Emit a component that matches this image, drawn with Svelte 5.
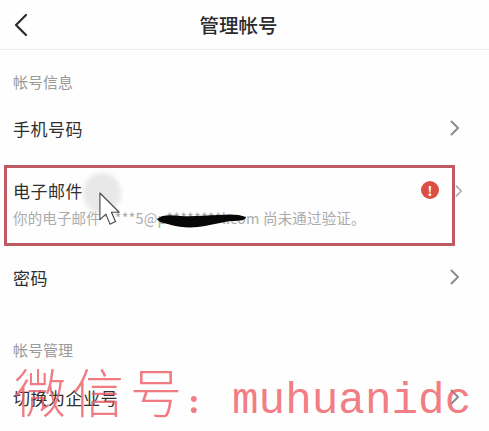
<script>
	const cjk = "管理帐号";
</script>

<div class="page">
	<header class="nav">
		<svg class="back" width="14" height="24" viewBox="0 0 14 24" fill="none" stroke="#2b2b2b" stroke-width="2.2" stroke-linecap="round" stroke-linejoin="round">
			<path d="M12 2 L2 12 L12 22" />
		</svg>
		<h1>{cjk}</h1>
	</header>

	<div class="label first">帐号信息</div>
	<div class="row phone">
		<span>手机号码</span>
		<svg class="chev" width="10" height="16" viewBox="0 0 10 16" fill="none" stroke="#8c8c8c" stroke-width="2" stroke-linecap="round" stroke-linejoin="round"><path d="M1.5 1.5 L8 8 L1.5 14.5" /></svg>
	</div>

	<div class="wrap">
		<div class="mail">
			<div class="mail-top">
				<span>电子邮件</span>
				<span class="alert">!</span>
			</div>
			<div class="sub">你的电子邮件*****5@p********l.com 尚未通过验证。</div>
		</div>
		<svg class="chev small" width="8" height="12" viewBox="0 0 10 16" fill="none" stroke="#a8a8a8" stroke-width="2" stroke-linecap="round" stroke-linejoin="round"><path d="M1.5 1.5 L8 8 L1.5 14.5" /></svg>

		<div class="touch"></div>
		<svg class="scribble" width="90" height="16" viewBox="0 0 90 16">
			<path d="M0 6 C6 1 14 2 24 3 C36 4 48 2 62 2 C72 1 82 1 89 4 C89 7 84 8 74 8 C66 9 58 11 48 13 C38 15 24 15 14 12 C8 10 2 10 0 6 Z" fill="#070707" />
		</svg>
		<svg class="cursor" width="22" height="35" viewBox="0 0 24 38">
			<path d="M1 1 V30 L7.500 24 L12 35 L18 32 L13.500 22 L22 22 Z" fill="#fff" stroke="#444" stroke-width="1.200" stroke-linejoin="round" />
		</svg>
	</div>

	<div class="row password">
		<span>密码</span>
		<svg class="chev" width="10" height="16" viewBox="0 0 10 16" fill="none" stroke="#8c8c8c" stroke-width="2" stroke-linecap="round" stroke-linejoin="round"><path d="M1.5 1.5 L8 8 L1.5 14.5" /></svg>
	</div>

	<div class="label second">帐号管理</div>
	<div class="row switch">
		<span>切换为企业号</span>
		<svg class="chev" width="10" height="16" viewBox="0 0 10 16" fill="none" stroke="#8c8c8c" stroke-width="2" stroke-linecap="round" stroke-linejoin="round"><path d="M1.5 1.5 L8 8 L1.5 14.5" /></svg>
	</div>

	<div class="mark"><span class="mark-cn">微信号</span><span class="mark-colon">:</span><span class="mark-en">muhuanidc</span></div>
</div>

<style>
	:global(body) {
		margin: 0;
		background: #fff;
	}
	.page {
		position: relative;
		width: 489px;
		height: 431px;
		overflow: hidden;
		background: #fefefe;
		color: #2f2f2f;
		font-family: "Noto Sans CJK SC", "Noto Sans", sans-serif;
		font-size: 17px;
	}
	.nav {
		display: flex;
		align-items: center;
		justify-content: center;
		position: relative;
		height: 49px;
		padding-right: 12px;
		border-bottom: 1px solid #ececec;
	}
	.back {
		position: absolute;
		left: 14px;
		top: 13px;
	}
	h1 {
		margin: 0;
		font-size: 19.500px;
		font-weight: 500;
		color: #2b2b2b;
	}
	.label {
		padding-left: 13px;
		font-size: 15px;
		line-height: 20px;
		color: #9a9a9a;
	}
	.label.first {
		margin-top: 22px;
	}
	.label.second {
		margin-top: 38px;
	}
	.row {
		display: flex;
		align-items: center;
		justify-content: space-between;
		height: 50px;
		padding: 0 29px 0 13px;
		letter-spacing: 0.500px;
	}
	.phone {
		margin-top: 11px;
	}
	.wrap {
		position: relative;
		display: flex;
		align-items: center;
		margin: 12px 0 0 4px;
		width: 485px;
	}
	.mail {
		box-sizing: border-box;
		width: 451px;
		height: 81px;
		border: 3px solid #bd5a62;
		padding: 8px 13px 0 6px;
	}
	.mail-top {
		display: flex;
		align-items: center;
		justify-content: space-between;
		height: 28px;
		letter-spacing: 0.500px;
	}
	.alert {
		display: flex;
		align-items: center;
		justify-content: center;
		width: 18px;
		height: 18px;
		border-radius: 50%;
		background: #dc5044;
		color: #fff;
		font-size: 13px;
		font-weight: 700;
		letter-spacing: 0;
	}
	.sub {
		margin-top: 4px;
		font-size: 14.500px;
		line-height: 20px;
		letter-spacing: 0.150px;
		color: #ababab;
		white-space: nowrap;
	}
	.small {
		margin: 0;
		transform: translateY(-15px);
	}
	.touch {
		position: absolute;
		left: 79px;
		top: 8px;
		width: 38px;
		height: 40px;
		border-radius: 50%;
		background: #e8e8e8;
		filter: blur(2px);
	}
	.scribble {
		position: absolute;
		left: 153px;
		top: 48px;
	}
	.cursor {
		position: absolute;
		left: 95px;
		top: 27px;
	}
	.password {
		margin-top: 6px;
	}
	.switch {
		margin-top: 12px;
	}
	.mark {
		position: absolute;
		left: 14px;
		top: 365px;
		display: flex;
		align-items: baseline;
		height: 52px;
		color: rgba(238, 90, 100, 0.8);
		white-space: nowrap;
	}
	.mark-cn {
		font-size: 52px;
		font-weight: 200;
		letter-spacing: 6px;
		line-height: 52px;
	}
	.mark-colon {
		font-family: "Liberation Serif", serif;
		font-weight: 700;
		font-size: 36px;
		margin: 0 32px 0 0;
	}
	.mark-en {
		font-family: "Liberation Mono", monospace;
		font-size: 44.300px;
	}
</style>
